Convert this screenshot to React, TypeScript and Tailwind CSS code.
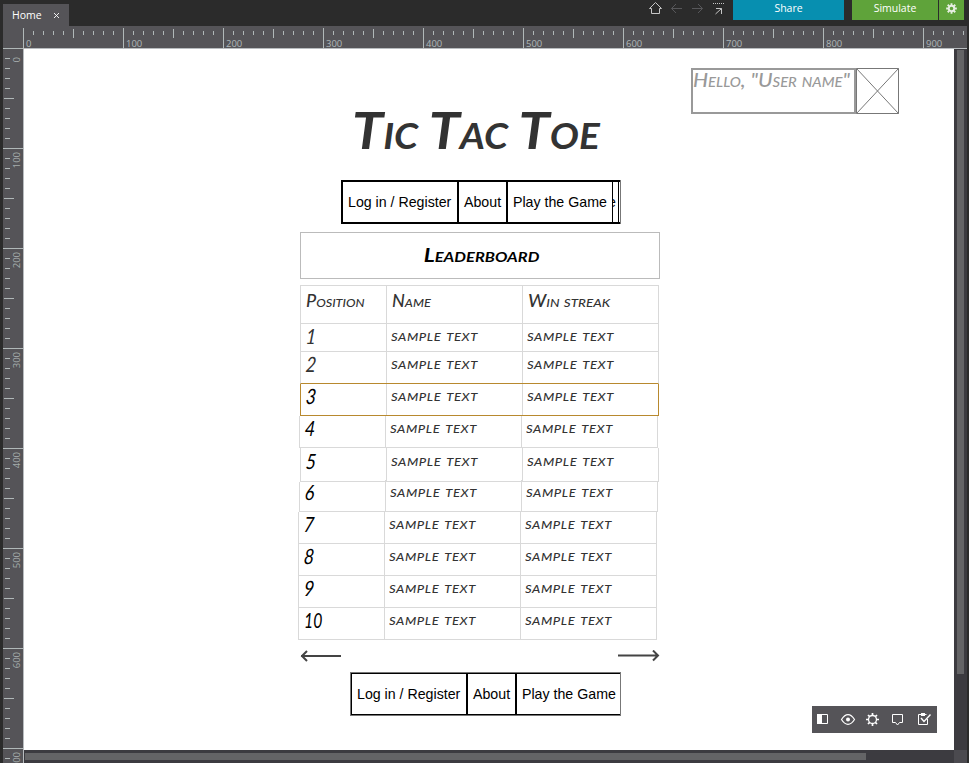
import React from "react";

const hand = "font-['Rock_Salt','Lato',sans-serif] italic [font-variant:small-caps] whitespace-nowrap";

const hundreds = [0, 1, 2, 3, 4, 5, 6, 7, 8, 9];
const steps = [1, 2, 3, 4, 5, 6, 7, 8, 9];

function TopRuler() {
  return (
    <div className="flex h-[23px] w-[964px] shrink-0 overflow-hidden border-b border-[#b8bcbf] bg-[#555458] pl-5">
      {hundreds.map((n) => (
        <div key={n} className="flex w-[100px] shrink-0">
          <div className="mt-0.5 h-5 w-px bg-[#b0b8b8]" />
          <div className="w-[99px]">
            <div className="flex h-3 gap-[9px] pl-[9px] pt-[3px]">
              {steps.map((s) => (
                <div key={s} className={s === 5 ? "h-[9px] w-px bg-[#b0b8b8]" : "mt-0.5 h-1 w-px bg-[#b0b8b8]"} />
              ))}
            </div>
            <div className="pl-0.5 font-['Open_Sans',sans-serif] text-[9.5px] leading-[11px] text-[#b0b8b8]">{n * 100}</div>
          </div>
        </div>
      ))}
    </div>
  );
}

function SideRuler() {
  return (
    <div className="-mt-px h-[715px] w-[21px] shrink-0 overflow-hidden border-r border-[#b8bcbf] bg-[#555458]">
      {hundreds.slice(0, 8).map((n) => (
        <div key={n} className="h-[100px]">
          <div className="h-px w-5 bg-[#b0b8b8]" />
          <div className="flex h-[99px]">
            <div className="flex w-[9px] flex-col gap-[9px] pl-px pt-[9px]">
              {steps.map((s) => (
                <div key={s} className={s === 5 ? "h-px w-[10px] shrink-0 bg-[#b0b8b8]" : "ml-px h-px w-[5px] shrink-0 bg-[#b0b8b8]"} />
              ))}
            </div>
            <div className={(n === 0 ? "mt-2" : "mt-[3px]") + " h-fit rotate-180 font-['Open_Sans',sans-serif] text-[9.5px] leading-[9px] text-[#a4acac] [writing-mode:vertical-rl]"}>
              {n * 100}
            </div>
          </div>
        </div>
      ))}
    </div>
  );
}

function Gear({ className }: { className: string }) {
  return (
    <svg className={className} viewBox="0 0 14 14" fill="none" stroke="currentColor">
      <circle cx="7" cy="7" r="3.5" strokeWidth="2.4" />
      <path d="M7 .2v3M7 10.800v3M.2 7h3M10.800 7h3M2.200 2.200l2 2M9.800 9.800l2 2M11.800 2.200l-2 2M4.200 9.800l-2 2" strokeWidth="2.4" />
    </svg>
  );
}

function TopBar() {
  return (
    <header className="flex h-[26px] shrink-0 font-['Open_Sans',sans-serif] text-white">
      <div className="ml-[3px] mt-1 flex h-[22px] w-[66px] items-center bg-[#555458] pl-[9px] text-[10.5px]">
        <span className="w-[42px] pt-px">Home</span>
        <svg className="mt-px h-[5px] w-[5px]" viewBox="0 0 5 5" stroke="#fff" strokeWidth=".9"><path d="M0 0l5 5M5 0 0 5" /></svg>
      </div>
      <svg className="ml-[579px] h-5 w-[78px] shrink-0" viewBox="648 0 78 20" fill="none">
        <path d="M649.5 8.5 655.5 2.5 661.5 8.5H659.5V13.5H651.5V8.5Z" stroke="#c6c6c6" />
        <path d="M682 8.5H671.5M676 4l-4.500 4.500 4.500 4.500M692 8.500h10.500M698 4l4.500 4.500L698 13" stroke="#57575a" />
        <path d="M713 3.500h11" stroke="#c6c6c6" strokeDasharray="1 1" />
        <path d="M716 8.500h5.500V14M721.500 8.500 715.500 14" stroke="#c6c6c6" />
      </svg>
      <button className="ml-[7px] h-5 w-[111px] bg-[#078fb0] pb-1 text-[10.5px] font-medium leading-4">Share</button>
      <button className="ml-2 h-5 w-[86px] bg-[#5fa33a] pb-1 text-[10.5px] font-medium leading-4">Simulate</button>
      <button className="ml-px flex h-5 w-[25px] justify-center bg-[#5fa33a] pt-[3px] text-[#e7efe2]"><Gear className="h-[11px] w-[11px]" /></button>
    </header>
  );
}

const nav = "flex items-center font-['Liberation_Sans',Arial,sans-serif] text-[14.2px] text-black whitespace-nowrap";

const rows = [
  { n: 1, box: "h-7 w-[359px]", pad: "pt-0", num: "text-[#333]" },
  { n: 2, box: "h-8 w-[359px]", pad: "pt-0", num: "text-[#333]" },
  { n: 3, box: "h-8 w-[359px]", pad: "pt-0", num: "text-black" },
  { n: 4, box: "-ml-px h-8 w-[359px]", pad: "pt-0", num: "text-black" },
  { n: 5, box: "h-[34px] w-[359px]", pad: "pt-px", num: "text-black" },
  { n: 6, box: "-ml-px h-[30px] w-[359px]", pad: "-mt-0.5", num: "text-black" },
  { n: 7, box: "-ml-0.5 h-8 w-[359px]", pad: "pt-0", num: "text-black" },
  { n: 8, box: "-ml-0.5 h-8 w-[359px]", pad: "pt-0", num: "text-black" },
  { n: 9, box: "-ml-0.5 h-8 w-[359px]", pad: "pt-0", num: "text-black" },
  { n: 10, box: "-ml-0.5 h-8 w-[359px]", pad: "pt-0", num: "text-black" },
];

function Sample() {
  return <span className="-ml-px inline-block origin-left scale-x-[1.185] tracking-[0.5px]">sample text</span>;
}

function Leaderboard() {
  return (
    <div className="mt-1.5 w-[359px] text-[#333]">
      <div className={"flex h-[39px] border border-[#d9d9d9] text-[17px] font-medium leading-[22px] " + hand}>
        <div className="w-[86px] border-r border-[#d9d9d9] pl-[5px] pt-1"><span className="inline-block origin-left scale-x-[1.06]">Position</span></div>
        <div className="w-[136px] border-r border-[#d9d9d9] pl-[5px] pt-1"><span className="inline-block origin-left scale-x-[1.06]">Name</span></div>
        <div className="pl-[5px] pt-1"><span className="inline-block origin-left scale-x-[1.12]">Win streak</span></div>
      </div>
      {rows.map((r) => (
        <div
          key={r.n}
          className={
            "flex border-b leading-[22px] " + hand + " " + r.box +
            (r.n === 3
              ? " border-x border-[#b8892e]"
              : r.n === 2
                ? " border-x border-x-[#d9d9d9] border-b-[#b8892e]"
                : " border-x border-[#d9d9d9]")
          }
        >
          <div className={"w-[86px] border-r border-[#d9d9d9] pl-[5px] text-[21px] " + r.pad + " " + r.num}>
            <span className={r.n === 10 ? "inline-block origin-left translate-y-px scale-x-[.75]" : "inline-block origin-left translate-y-px -skew-x-6 scale-x-[.85]"}>{r.n}</span>
          </div>
          <div className={"w-[136px] border-r border-[#d9d9d9] pl-[5px] text-[16px] font-medium " + r.pad}><Sample /></div>
          <div className={"pl-[5px] text-[16px] font-medium " + r.pad}><Sample /></div>
        </div>
      ))}
    </div>
  );
}

function Design() {
  return (
    <div className="relative h-[701px] w-[930px] shrink-0 overflow-hidden bg-white">
      <div className="absolute left-[667px] top-[19px] flex h-[46px] w-[208px]">
        <div className={"w-[165px] border-2 border-[#999] text-[20px] font-medium leading-[18px] text-[#999] " + hand}><span className="inline-block origin-left scale-x-[1.06]">Hello, "User name"</span></div>
        <svg className="h-[46px] w-[43px]" viewBox="0 0 43 46" fill="none" stroke="#777"><path d="M.5.5h42v45H.5ZM.5.5l42 45M42.5.5.5 45.5" /></svg>
      </div>
      <div className="ml-[276px] flex w-[360px] flex-col pt-[49px]">
        <h1 className={"ml-[52px] h-[82px] text-[52px] font-bold leading-[62px] text-[#333] " + hand}><span className="inline-block origin-left scale-x-[1.075]">Tic Tac Toe</span></h1>
        <nav className={"ml-[41px] h-11 w-[280px] border-y-2 border-l-2 border-black " + nav}>
          <div className="flex h-full w-[116px] shrink-0 items-center border-r-2 border-black pl-[5px] pt-px">Log in / Register</div>
          <div className="flex h-full w-[49px] shrink-0 items-center border-r-2 border-black pl-[5px] pt-px">About</div>
          <div className="flex h-full w-[105px] shrink-0 items-center border-r border-black pl-[5px] pt-px">Play the Game</div>
          <div className="flex h-full w-1.5 shrink-0 items-center overflow-hidden border-r border-black"><span className="-ml-[5px] pt-px">e</span></div>
          <div className="ml-px h-11 w-px shrink-0 bg-[#777]" />
        </nav>
        <div className={"mt-2 flex h-[47px] w-[360px] items-center justify-center border border-[#bbb] pl-1 text-[18px] font-bold text-black " + hand}><span className="inline-block scale-x-[1.27]">Leaderboard</span></div>
        <Leaderboard />
        <svg className="mt-2.5 h-3 w-[360px]" viewBox="0 0 360 12" fill="none" stroke="#444" strokeWidth="2">
          <path d="M1 6h40M7 1l-5 5 5 5M318 5.500h40M353 .500l5 5-5 5" />
        </svg>
        <nav className={"ml-[50px] mt-[10px] h-11 w-[271px] border border-[#777] " + nav}>
          <div className="flex h-full w-[117px] items-center border-y border-l border-r-2 border-black pl-[5px] pt-px">Log in / Register</div>
          <div className="flex h-full w-[49px] items-center border-y border-r-2 border-black pl-[5px] pt-px">About</div>
          <div className="flex h-full w-[103px] items-center border-y border-black pl-[5px] pt-px">Play the Game</div>
        </nav>
      </div>
      <div className="absolute left-[788px] top-[657px] flex h-[27px] w-[125px] bg-[#555458] text-white">
        <svg className="h-[27px] w-[125px]" viewBox="0 0 125 27" fill="none" stroke="currentColor">
          <path d="M5.5 8.5h10v9h-10Z" /><path d="M5 8h5v10H5Z" fill="currentColor" stroke="none" />
          <path d="M29.5 13.5c4-6.5 9-6.5 13 0-4 6.5-9 6.5-13 0Z" strokeWidth="1.2" /><circle cx="36" cy="13.5" r="2" fill="currentColor" stroke="none" />
          <circle cx="60.5" cy="13.5" r="4" strokeWidth="1.3" />
          <path d="M60.5 7v2.5M60.5 17.5V20M54 13.5h2.5M64.5 13.5H67M56 9l1.7 1.7M63.3 16.3 65 18M65 9l-1.7 1.7M57.7 16.3 56 18" strokeWidth="1.7" />
          <path d="M80.500 8.500h10v8h-3l-2 2.500-2-2.500h-3Z" />
          <path d="M114.500 8.500h-8v10h9v-5.500" /><path d="M109 7h4v3h-4Z" fill="currentColor" stroke="none" /><path d="m109 12 3 3.500 6.500-7" strokeWidth="1.400" />
        </svg>
      </div>
    </div>
  );
}

export default function App() {
  return (
    <div className="flex h-[763px] w-[969px] flex-col overflow-hidden bg-[#2b2b2b]">
      <TopBar />
      <div className="ml-[3px] flex flex-col">
        <TopRuler />
        <div className="flex h-[714px]">
          <SideRuler />
          <div className="flex flex-col">
            <Design />
            <div className="h-[13px] w-[930px] bg-[#3c3b40] pl-px pt-[3px]"><div className="h-[7px] w-[841px] bg-[#646466]" /></div>
          </div>
          <div className="h-[714px] w-[13px] bg-[#3c3b40]">
            <div className="h-[701px] pl-[3px] pt-px"><div className="h-[624px] w-[7px] bg-[#646466]" /></div>
            <div className="h-[13px] bg-[#4b4a4f]" />
          </div>
        </div>
      </div>
    </div>
  );
}
